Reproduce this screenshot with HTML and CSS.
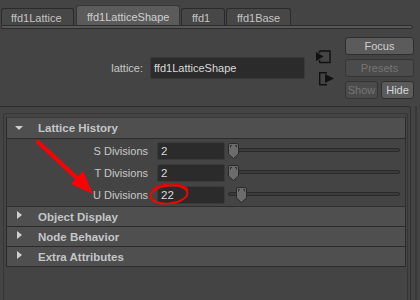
FILE: index.html
```html
<!DOCTYPE html>
<html>
<head>
<meta charset="utf-8">
<link rel="stylesheet" href="styles.css">
</head>
<body>
<div class="tabs">
  <div class="tab t1">ffd1Lattice</div>
  <div class="tab t2 active">ffd1LatticeShape</div>
  <div class="tab t3">ffd1</div>
  <div class="tab t4">ffd1Base</div>
</div>
<div class="tabline"></div>
<div class="top">
  <div class="attr">
    <span class="lbl">lattice:</span>
    <div class="field wide">ffd1LatticeShape</div>
    <div class="icons">
      <svg class="ic1" width="15" height="14" viewBox="0 0 15 14"><path d="M3.5 1 H14 V12.5 H3.5" fill="none" stroke="#111" stroke-width="1.4"/><path d="M3.5 1 V3 M3.5 10 V12.5" stroke="#111" stroke-width="1.4"/><path d="M0 2 L7.5 6.5 L0 11 Z" fill="#111"/></svg>
      <svg class="ic2" width="15" height="14" viewBox="0 0 15 14"><path d="M8 0.7 H0.7 V12.8 H8" fill="none" stroke="#111" stroke-width="1.4"/><path d="M6 2 L15 6.5 L6 11 Z" fill="#111"/></svg>
    </div>
  </div>
  <div class="btns">
    <div class="btn">Focus</div>
    <div class="btn dis">Presets</div>
    <div class="btnrow">
      <div class="btn dis">Show</div>
      <div class="btn hide">Hide</div>
    </div>
  </div>
</div>
<div class="main">
  <div class="scroll">
    <div class="frame">
      <div class="hdr first"><span class="tribox"><span class="tri down"></span></span>Lattice History</div>
      <div class="body">
        <div class="row">
          <span class="rlbl">S Divisions</span>
          <div class="field num">2</div>
          <div class="slider"><div class="track"></div><svg class="thumb" style="left:0px" width="11" height="16" viewBox="0 0 11 16"><path d="M0.5 2 Q0.5 0.5 2 0.5 H9 Q10.5 0.5 10.5 2 V11 L5.5 15.5 L0.5 11 Z" fill="#6c6c6c" stroke="#2a2a2a"/><path d="M2.5 4.5 V2.5 H4 M7 2.5 H8.5 V4.5" fill="none" stroke="#2e2e2e"/></svg></div>
        </div>
        <div class="row">
          <span class="rlbl">T Divisions</span>
          <div class="field num">2</div>
          <div class="slider"><div class="track"></div><svg class="thumb" style="left:0px" width="11" height="16" viewBox="0 0 11 16"><path d="M0.5 2 Q0.5 0.5 2 0.5 H9 Q10.5 0.5 10.5 2 V11 L5.5 15.5 L0.5 11 Z" fill="#6c6c6c" stroke="#2a2a2a"/><path d="M2.5 4.5 V2.5 H4 M7 2.5 H8.5 V4.5" fill="none" stroke="#2e2e2e"/></svg></div>
        </div>
        <div class="row">
          <span class="rlbl">U Divisions</span>
          <div class="field num">22</div>
          <div class="slider"><div class="track"></div><svg class="thumb" style="left:8px" width="11" height="16" viewBox="0 0 11 16"><path d="M0.5 2 Q0.5 0.5 2 0.5 H9 Q10.5 0.5 10.5 2 V11 L5.5 15.5 L0.5 11 Z" fill="#6c6c6c" stroke="#2a2a2a"/><path d="M2.5 4.5 V2.5 H4 M7 2.5 H8.5 V4.5" fill="none" stroke="#2e2e2e"/></svg></div>
        </div>
      </div>
      <div class="hdr"><span class="tribox"><span class="tri right"></span></span>Object Display</div>
      <div class="hdr"><span class="tribox"><span class="tri right"></span></span>Node Behavior</div>
      <div class="hdr"><span class="tribox"><span class="tri right"></span></span>Extra Attributes</div>
    </div>
  </div>
  <div class="sbar"></div>
</div>
<svg class="annot" width="420" height="300" viewBox="0 0 420 300">
  <line x1="38" y1="142" x2="79" y2="180" stroke="#f00" stroke-width="4" stroke-linecap="round"/>
  <path d="M93 194 L71 184 L83 171 Z" fill="#f00"/>
  <ellipse cx="169" cy="194.5" rx="18.5" ry="9" fill="none" stroke="#f00" stroke-width="1.8" transform="rotate(-6 169 194.5)"/>
  <path d="M152 190 Q160 183 176 184 Q186 186 188 190" fill="none" stroke="#e00" stroke-width="1.4"/>
</svg>
</body>
</html>
```
FILE: styles.css
```css
html, body {
  margin: 0;
  padding: 0;
}
body {
  width: 420px;
  height: 300px;
  overflow: hidden;
  background: #444444;
  font-family: "Liberation Sans", Arial, sans-serif;
  font-size: 11px;
  color: #c8c8c8;
  position: relative;
}
.tabs {
  display: flex;
  align-items: flex-end;
  height: 25px;
  padding-left: 1px;
  box-sizing: border-box;
}
.tab {
  box-sizing: border-box;
  height: 17px;
  border: 1px solid #2b2b2b;
  border-bottom: none;
  border-radius: 3px 3px 0 0;
  background: #474747;
  display: flex;
  align-items: center;
  padding-left: 9px;
  padding-top: 1px;
  color: #c4c4c4;
}
.t1 { width: 73px; }
.t2 { width: 104px; margin-left: 2px; }
.t3 { width: 44px; margin-left: 1px; padding-left: 10px; }
.t4 { width: 65px; margin-left: 1px; padding-left: 10px; }
.tab.active {
  height: 20px;
  background: #5b5b5b;
  border-color: #353535;
  padding-left: 10px;
  padding-top: 2px;
  color: #cfcfcf;
}
.tabline {
  box-sizing: border-box;
  height: 4px;
  margin: 0 7px 0 1px;
  background: #575757;
  border: 1px solid #2c2c2c;
  border-radius: 0 3px 3px 0;
}
.top {
  display: flex;
  height: 77px;
}
.attr {
  display: flex;
  align-items: flex-start;
}
.lbl {
  width: 143px;
  text-align: right;
  margin-top: 28px;
  line-height: 22px;
}
.field {
  box-sizing: border-box;
  background: #2b2b2b;
  border: 1px solid #3a3a3a;
  border-radius: 2px;
  color: #dadada;
  display: flex;
  align-items: center;
  padding-left: 3px;
}
.field.wide {
  width: 155px;
  height: 22px;
  margin-top: 28px;
  margin-left: 7px;
}
.icons {
  display: flex;
  flex-direction: column;
  margin-left: 11px;
  margin-top: 21px;
}
.ic1, .ic2 { display: block; }
.ic2 {
  margin-top: 8px;
  margin-left: 3px;
}
.btns {
  width: 69px;
  margin: 8px 6px 0 auto;
  display: flex;
  flex-direction: column;
  gap: 4px;
}
.btn {
  box-sizing: border-box;
  height: 18px;
  background: #5b5b5b;
  border: 1px solid #2e2e2e;
  border-radius: 3px;
  color: #d0d0d0;
  display: flex;
  align-items: center;
  justify-content: center;
}
.btn.dis {
  background: #4b4b4b;
  border-color: #353535;
  color: #767676;
}
.btn.hide {
  color: #d4d8dc;
}
.btnrow {
  display: flex;
  gap: 3px;
}
.btnrow .btn {
  width: 33px;
}
.main {
  display: flex;
  height: 194px;
}
.scroll {
  flex: 1;
  box-sizing: border-box;
  border-top: 1px solid #2c2c2c;
  border-right: 1px solid #2e2e2e;
  border-top-right-radius: 3px;
  padding: 6px 2px 0 3px;
}
.frame {
  box-sizing: border-box;
  height: 100%;
  border: 1px solid #363636;
  border-bottom: none;
  border-radius: 3px 3px 0 0;
  padding: 3px 1px 0 2px;
}
.sbar {
  width: 9px;
  background: linear-gradient(to right, transparent 4px, #383838 4px, #383838 6px, transparent 6px);
}
.hdr {
  box-sizing: border-box;
  height: 20px;
  background: #4f4f4f;
  border: 1px solid #2b2b2b;
  border-top: none;
  display: flex;
  align-items: center;
  font-weight: bold;
  font-size: 11.5px;
  color: #c4c6c8;
}
.hdr.first {
  height: 22px;
  border-top: 1px solid #3a3a3a;
}
.tribox {
  width: 23px;
  margin-right: 8px;
  display: flex;
  justify-content: center;
}
.tri {
  width: 0;
  height: 0;
}
.tri.down {
  border-left: 4px solid transparent;
  border-right: 4px solid transparent;
  border-top: 4px solid #d0d0d0;
  margin-top: -1px;
}
.tri.right {
  border-top: 4px solid transparent;
  border-bottom: 4px solid transparent;
  border-left: 5px solid #d0d0d0;
  margin-left: 1px;
  margin-top: -3px;
}
.body {
  box-sizing: border-box;
  border: 1px solid #2e2e2e;
  border-top: none;
  padding: 3px 0 2px 0;
  display: flex;
  flex-direction: column;
  gap: 4px;
}
.row {
  display: flex;
  align-items: center;
  height: 18px;
}
.rlbl {
  width: 141px;
  text-align: right;
}
.field.num {
  width: 68px;
  height: 18px;
  margin-left: 9px;
  font-size: 11.5px;
}
.slider {
  position: relative;
  width: 172px;
  height: 18px;
  margin-left: 3px;
}
.track {
  box-sizing: border-box;
  margin-top: 6px;
  height: 4px;
  background: #3b3b3b;
  border: 1px solid #2a2a2a;
  border-radius: 2px;
}
.thumb {
  position: absolute;
  top: 1px;
}
.annot {
  position: absolute;
  left: 0;
  top: 0;
  pointer-events: none;
}
```
